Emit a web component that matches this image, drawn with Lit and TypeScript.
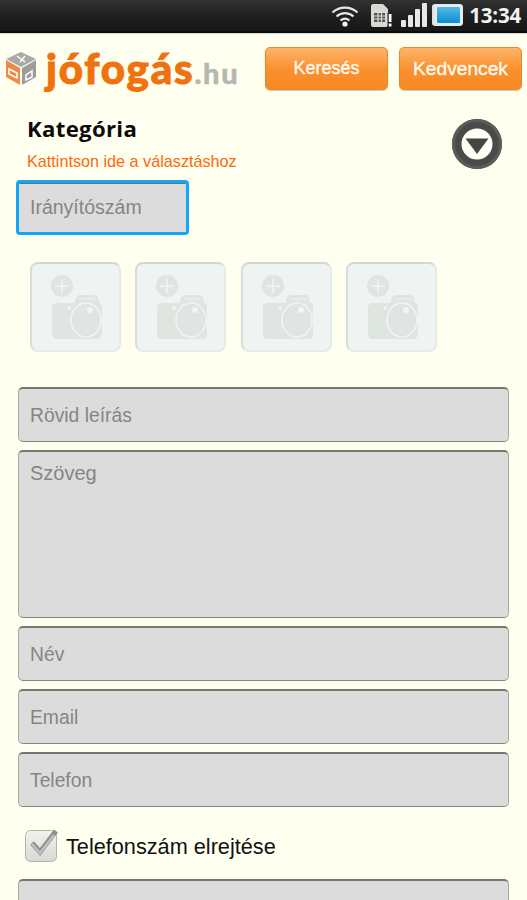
import { LitElement, css, html, svg } from "lit";
import { customElement } from "lit/decorators.js";

const cameraIcon = svg`
  <svg class="camera" width="62" height="68" viewBox="0 0 62 68">
    <circle cx="18" cy="13" r="11" fill="#dfe5e1" />
    <path d="M18 6v14M11 13h14" stroke="#f2f5f3" stroke-width="1.600" fill="none" />
    <path fill="#dfe5e1" d="M8 35c0-3 2-5 5-5h17l2-5c.5-2 2-3 4-3h14c2 0 3.500 1 4 3l1 5c2 0 3 2 3 5v26c0 3-2 5-5 5H13c-3 0-5-2-5-5z" />
    <ellipse cx="42" cy="47" rx="15" ry="17" fill="none" stroke="#f2f5f3" stroke-width="1.500" />
    <circle cx="46" cy="37" r="3" fill="#f2f5f3" />
    <circle cx="25" cy="35" r="1.800" fill="#f2f5f3" />
    <path d="M35 26h17" stroke="#f2f5f3" stroke-width="1" fill="none" />
  </svg>
`;

const statusIcons = html`
  <svg width="28" height="24" viewBox="0 0 28 24">
    <g fill="none" stroke="#e6e6e6" stroke-width="2.200">
      <path d="M1.500 9.500C8.500 3 19.500 3 26.500 9.500" />
      <path d="M5.500 13.500C10.500 9 17.500 9 22.500 13.500" />
      <path d="M9.500 17.500C12.500 15 15.500 15 18.500 17.500" />
    </g>
    <circle cx="14" cy="21" r="2.600" fill="#f4f4f4" />
  </svg>
  <svg class="sim" width="22" height="24" viewBox="0 0 22 24">
    <path fill="#d9d9d4" d="M1 3c0-1 .8-2 2-2h10l5 5v16c0 1-1 2-2 2H3c-1.200 0-2-1-2-2z" />
    <path fill="#55554f" d="M4 10h11v9H4z" />
    <path stroke="#d9d9d4" stroke-width="1.200" fill="none" d="M4 13h11M4 16h11M8 10v9M11.500 10v9" />
    <path fill="#fff" d="M18.500 11h3v8h-3zM18.500 20.500h3v3h-3z" />
    <path fill="#202020" d="M17.500 10h1v14h-1z" />
  </svg>
  <span class="signal">
    <i style="height:7px"></i><i style="height:12px"></i><i style="height:18px"></i><i style="height:24px"></i>
  </span>
  <span class="battery"><span class="battery-fill"></span></span>
`;

@customElement("app-root")
export class AppRoot extends LitElement {
  static styles = css`
    :host {
      display: block;
      width: 527px;
      height: 900px;
      overflow: hidden;
      background: #ffffef;
      font-family: "Liberation Sans", Arial, sans-serif;
    }

    .status {
      box-sizing: border-box;
      height: 33px;
      display: flex;
      align-items: center;
      justify-content: flex-end;
      padding: 0 6px 1px 0;
      background: linear-gradient(#313332, #1c1d1c 60%, #161716);
      border-bottom: 2px solid #0a0a0a;
      box-shadow: 0 1px 0 #d5d5c8;
    }
    .status svg {
      display: block;
    }
    .sim {
      margin-left: 11px;
    }
    .signal {
      display: flex;
      align-items: flex-end;
      gap: 2px;
      height: 24px;
      margin-left: 9px;
    }
    .signal i {
      display: block;
      width: 5px;
      border-radius: 1px;
      background: #e8e8e8;
    }
    .battery {
      box-sizing: border-box;
      width: 29px;
      height: 22px;
      margin-left: 7px;
      padding: 2px;
      border: 1px solid #e8e8e8;
      border-radius: 3px;
      background: #dfeff7;
      box-shadow: -2px 0 0 0 #e0e0e0;
    }
    .battery-fill {
      display: block;
      height: 100%;
      border-radius: 1px;
      background: linear-gradient(#57b8e6, #0b8fd0);
    }
    .clock {
      margin-left: 6px;
      color: #f2f2f2;
      font: 700 20.500px "Open Sans", sans-serif;
      letter-spacing: -0.2px;
    }

    .header {
      display: flex;
      align-items: center;
      padding: 14px 5px 0 4px;
    }
    .logo {
      display: flex;
      align-items: baseline;
      flex: 1;
      height: 43px;
    }
    .logo svg {
      align-self: center;
      margin-right: 8px;
    }
    .logo-main {
      color: #f0720f;
      font: 900 42px/43px Lato, sans-serif;
      letter-spacing: 1.800px;
      -webkit-text-stroke: 1px #f0720f;
    }
    .logo-tld {
      color: #b7b7b1;
      font: 900 29px/43px Lato, sans-serif;
      letter-spacing: 1.800px;
      -webkit-text-stroke: 0.5px #b7b7b1;
    }
    .btn {
      box-sizing: border-box;
      width: 123px;
      height: 43px;
      margin-left: 11px;
      display: flex;
      align-items: center;
      justify-content: center;
      color: #fff8ee;
      font-size: 19.200px;
      -webkit-text-stroke: 0.4px #fff8ee;
      border: 1px solid #e58a2c;
      border-radius: 5px;
      background: linear-gradient(#fdb468, #f98f2c 55%, #f78a24);
      box-shadow: 0 1px 1px rgba(120, 80, 20, 0.3);
    }
    .btn-search {
      font-size: 18px;
    }

    .category {
      display: flex;
      justify-content: space-between;
      align-items: flex-start;
      padding: 24px 25px 0 27px;
    }
    .category h1 {
      margin: 0;
      color: #0c0c0c;
      font: 700 22.200px/29px "Open Sans", sans-serif;
      letter-spacing: 0.3px;
    }
    .category p {
      margin: 9px 0 0;
      color: #f96a0c;
      font-size: 16.200px;
      line-height: 18px;
    }
    .round {
      display: block;
      margin-top: 5px;
    }

    .field {
      box-sizing: border-box;
      display: flex;
      align-items: center;
      height: 55px;
      padding: 2px 11px 0;
      color: #858585;
      font-size: 19.300px;
      background: #dcdcdc;
      border: 1px solid #a8a8a0;
      border-top: 2px solid #77776f;
      border-bottom-color: #85857d;
      border-radius: 5px;
    }
    .zip-wrap {
      box-sizing: border-box;
      width: 173px;
      height: 55px;
      margin: 10px 0 0 16px;
      padding: 0;
      border: 3px solid #12a6fa;
      border-radius: 4px;
      background: #dcdcdc;
      box-shadow: inset 0 1px 0 #6e6e66;
      display: flex;
      align-items: center;
      color: #858585;
      font-size: 19.500px;
    }
    .zip-wrap span {
      padding-left: 11px;
    }

    .photos {
      display: flex;
      gap: 14.300px;
      padding: 27px 0 0 30px;
    }
    .photo {
      box-sizing: border-box;
      width: 91px;
      height: 90px;
      display: flex;
      align-items: flex-start;
      background: #eff3f1;
      border: 2px solid #e6ebe7;
      border-top-color: #cfd8d1;
      border-left-color: #d7ded9;
      border-radius: 8px;
    }
    .camera {
      margin: 9px 0 0 12px;
    }

    .form {
      display: flex;
      flex-direction: column;
      gap: 8px;
      padding: 35px 18px 0;
    }
    .text-area {
      height: 168px;
      align-items: flex-start;
      padding-top: 10px;
      font-size: 20px;
    }
    .check-row {
      display: flex;
      align-items: center;
      gap: 6px;
      margin: 13px 0 0 7px;
      color: #121212;
      font-size: 21.700px;
      height: 35px;
    }
    .check-row span {
      padding-top: 3px;
    }
    .check {
      display: block;
      flex: none;
    }
    .submit {
      margin-top: 8px;
    }
  `;

  render() {
    const photos = [0, 1, 2, 3];
    return html`
      <div class="status">
        ${statusIcons}
        <span class="clock">13:34</span>
      </div>

      <div class="header">
        <div class="logo">
          <svg width="34" height="35" viewBox="0 0 34 35">
            <path fill="#a9a9a9" d="M17 1 32 8 17 16 2 8z" />
            <path fill="#ee8a45" d="M2 9l14 8v17L2 26z" />
            <path fill="#9c9c9c" d="M32 9v17l-14 8V17z" />
            <path fill="none" stroke="#fff" stroke-width="1.500" d="M13 5l8 6M21 5l-5 6M5 18l8 4v5l-8-4zM22 24v5l6-3v-6z" />
          </svg>
          <span class="logo-main">jófogás</span><span class="logo-tld">.hu</span>
        </div>
        <div class="btn btn-search">Keresés</div>
        <div class="btn">Kedvencek</div>
      </div>

      <div class="category">
        <div>
          <h1>Kategória</h1>
          <p>Kattintson ide a választáshoz</p>
        </div>
        <svg class="round" width="50" height="50" viewBox="0 0 50 50">
          <circle cx="25" cy="25" r="25" fill="#4a4a4a" />
          <circle cx="25" cy="25" r="23.500" fill="none" stroke="#5c5c5c" stroke-width="3" />
          <circle cx="25" cy="25" r="15.500" fill="#fffff5" />
          <path fill="#454545" d="M13.500 19.500h23L25 35z" />
        </svg>
      </div>

      <div class="zip-wrap"><span>Irányítószám</span></div>

      <div class="photos">
        ${photos.map(() => html`<div class="photo">${cameraIcon}</div>`)}
      </div>

      <div class="form">
        <div class="field">Rövid leírás</div>
        <div class="field text-area">Szöveg</div>
        <div class="field">Név</div>
        <div class="field">Email</div>
        <div class="field">Telefon</div>
        <div class="check-row">
          <svg class="check" width="35" height="35" viewBox="0 0 35 35">
            <defs>
              <linearGradient id="box" x1="0" y1="0" x2="0" y2="1">
                <stop offset="0" stop-color="#f2f2ee" />
                <stop offset="1" stop-color="#d8d8d4" />
              </linearGradient>
            </defs>
            <rect x="0.500" y="2.500" width="31" height="31" rx="5" fill="url(#box)" stroke="#b4b4ae" />
            <path fill="none" stroke="#8f8f8c" stroke-width="5" d="M7 15l8 9L31 3" />
            <path fill="none" stroke="#c0c0bd" stroke-width="2.500" d="M7 16l8 9L29 7" />
          </svg>
          <span>Telefonszám elrejtése</span>
        </div>
        <div class="field submit"></div>
      </div>
    `;
  }
}
